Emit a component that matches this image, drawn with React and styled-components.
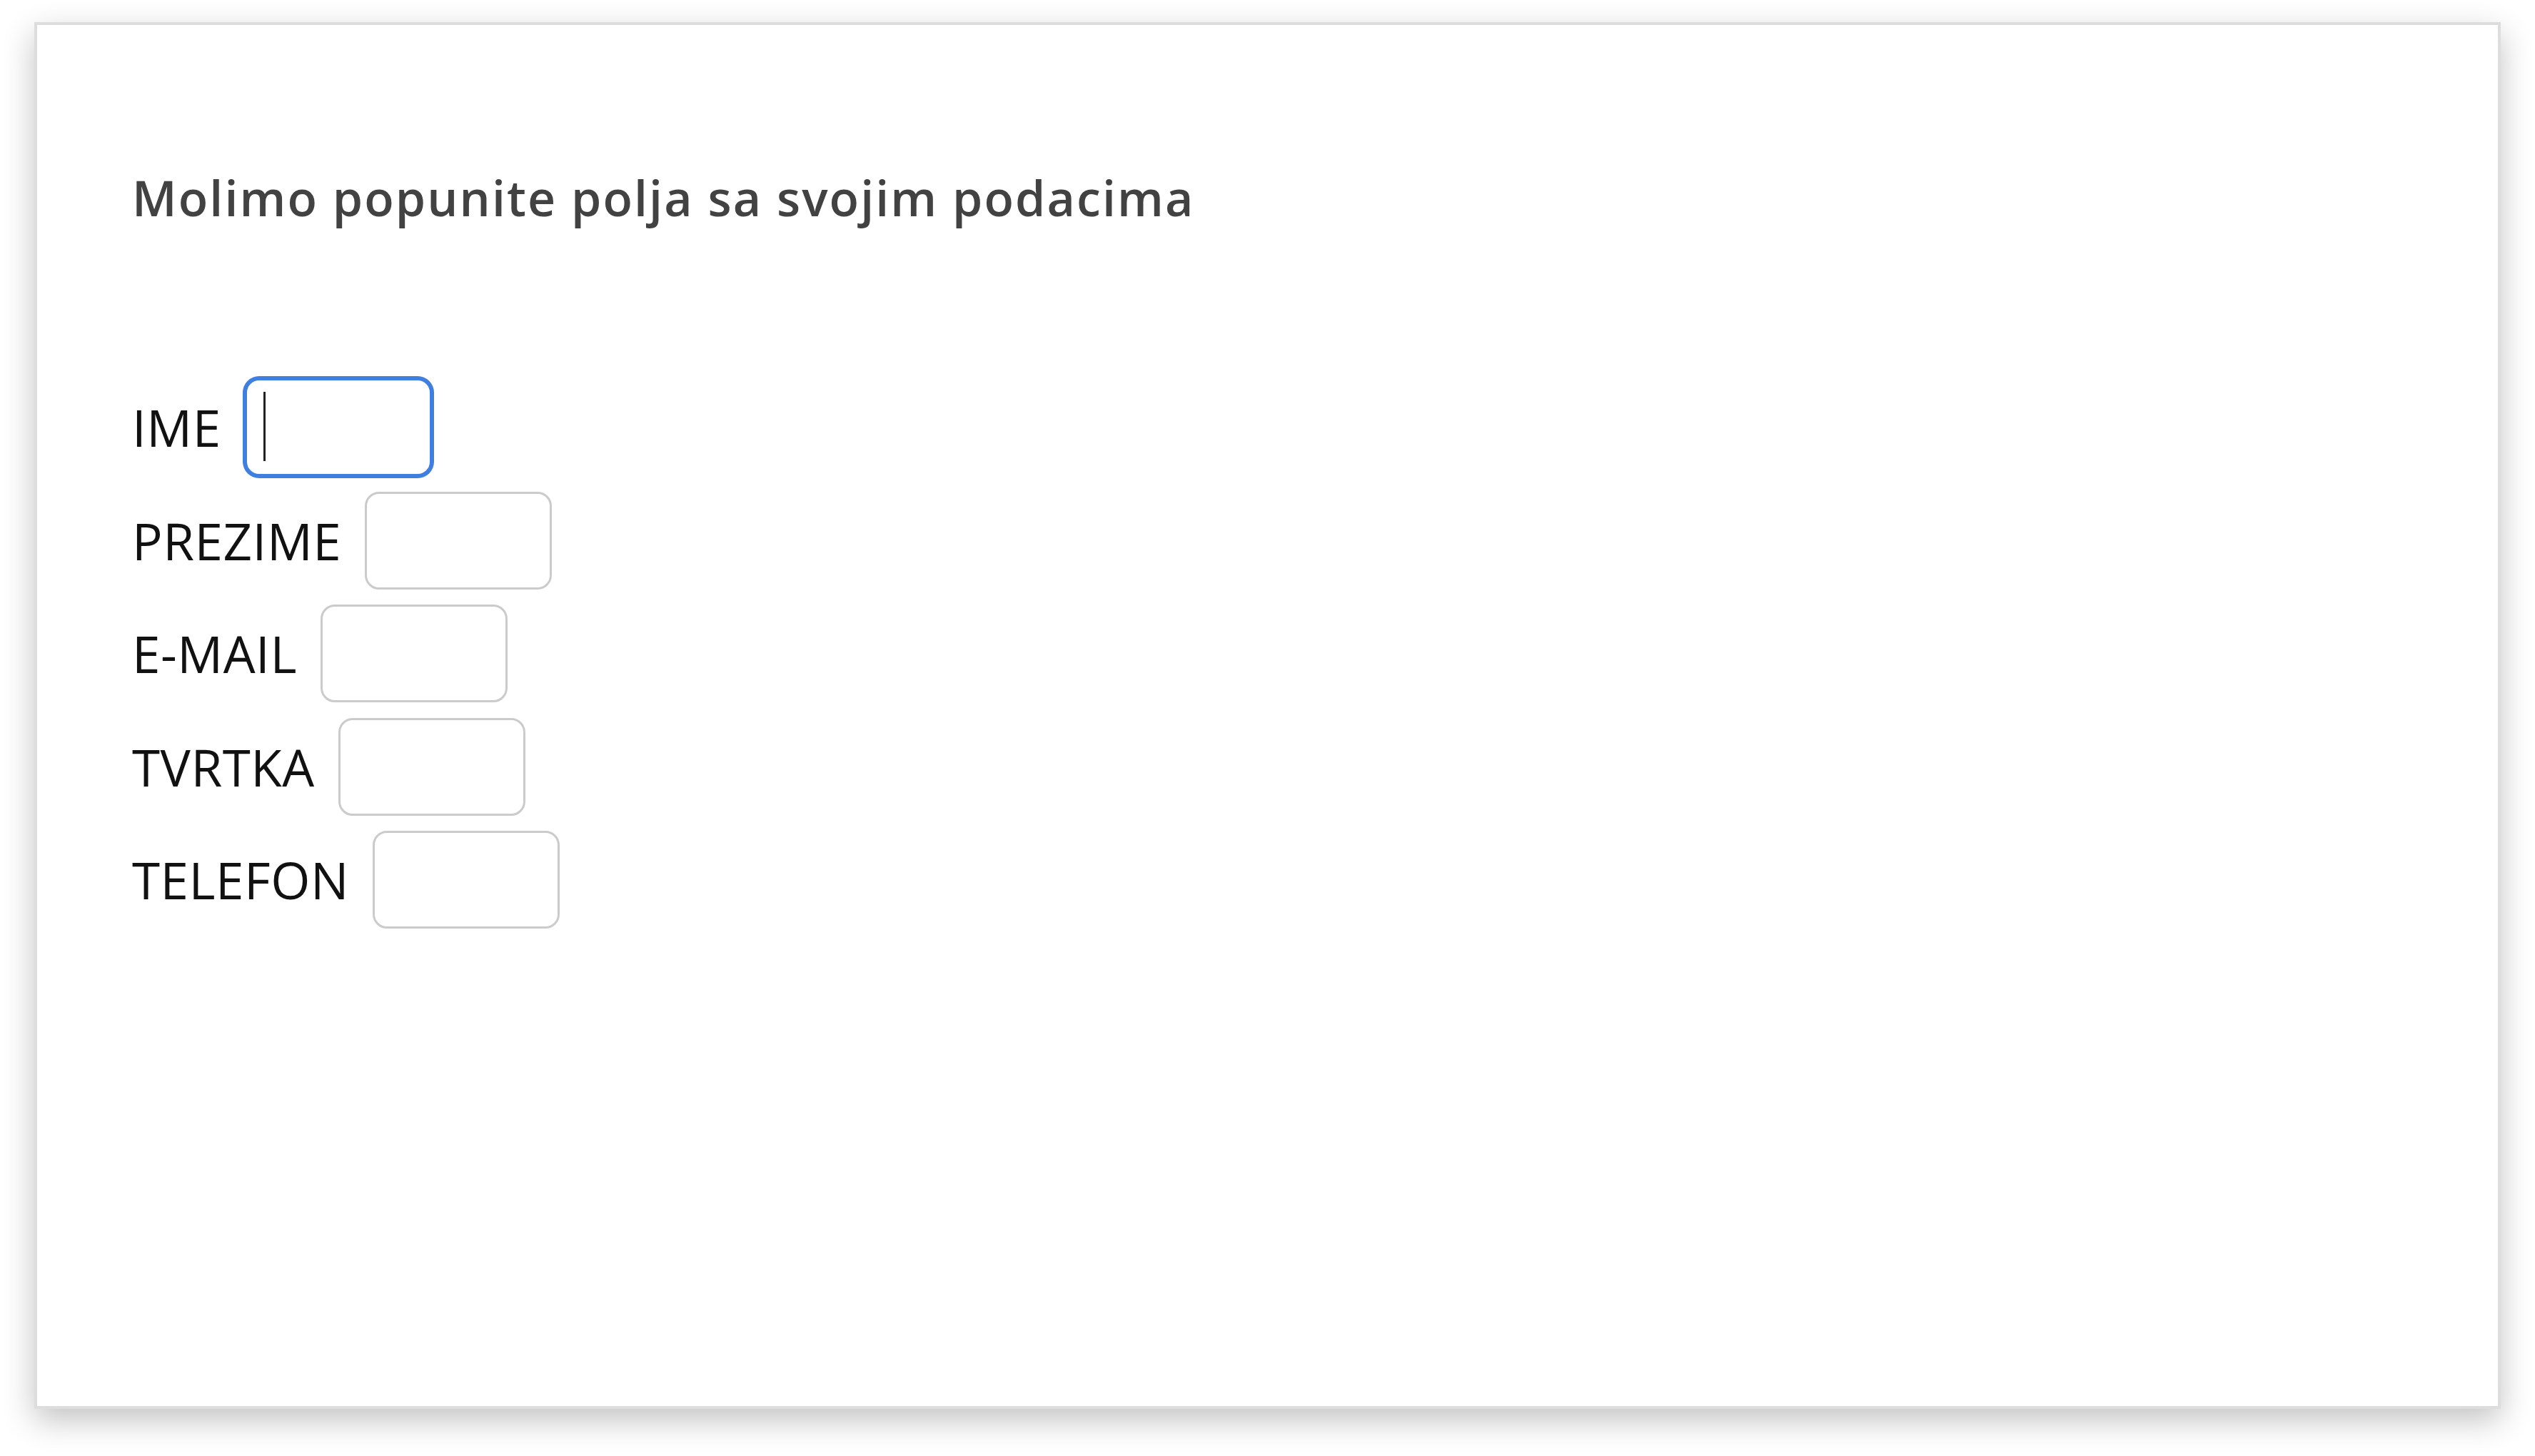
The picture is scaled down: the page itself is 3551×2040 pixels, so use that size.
import React from "react";
import styled, { createGlobalStyle } from "styled-components";

const Global = createGlobalStyle`
  html, body {
    margin: 0;
    padding: 0;
    background: #ffffff;
  }
  body {
    font-family: "Open Sans", "Liberation Sans", sans-serif;
  }
  * { box-sizing: border-box; }
`;

const Page = styled.main`
  min-height: 100vh;
  padding: 31px 48px 66px 48px;
  background: #ffffff;
`;

const Card = styled.section`
  height: 1943px;
  background: #ffffff;
  border: 4px solid #dddddd;
  box-shadow: 0 16px 42px rgba(0, 0, 0, 0.24);
  padding: 195px 133px 0 133px;
`;

const Heading = styled.h1`
  margin: 0;
  font-family: "Open Sans", "Liberation Sans", sans-serif;
  font-size: 68px;
  font-weight: 600;
  letter-spacing: 2.1px;
  line-height: normal;
  color: #424242;
`;

const Form = styled.form`
  margin-top: 207px;
  display: flex;
  flex-direction: column;
  gap: 21.5px;
`;

const Row = styled.div`
  display: flex;
  align-items: center;
  gap: 33px;
`;

const Label = styled.label`
  font-family: "Open Sans", "Liberation Sans", sans-serif;
  font-size: 71px;
  font-weight: 400;
  letter-spacing: 0.5px;
  line-height: normal;
  color: #111111;
`;

const FieldWrap = styled.span`
  position: relative;
  display: inline-flex;
`;

const Input = styled.input`
  width: 262px;
  height: 137px;
  border: 3px solid ${(p) => (p.$focused ? "#3f7fe0" : "#cbcbcb")};
  border-radius: 20px;
  background: #ffffff;
  outline: none;
  box-shadow: ${(p) => (p.$focused ? "0 0 0 3px #3f7fe0" : "none")};
  caret-color: transparent;
  font-family: "Open Sans", "Liberation Sans", sans-serif;
  font-size: 70px;
  padding: 0 20px;
`;

const Caret = styled.span`
  position: absolute;
  left: 26px;
  top: 19px;
  width: 3px;
  height: 97px;
  background: #222222;
  pointer-events: none;
`;

const fields = [
  { id: "ime", label: "IME", focused: true },
  { id: "prezime", label: "PREZIME" },
  { id: "email", label: "E-MAIL" },
  { id: "tvrtka", label: "TVRTKA" },
  { id: "telefon", label: "TELEFON" },
];

export default function App() {
  return (
    <>
      <Global />
      <Page>
        <Card>
          <Heading>Molimo popunite polja sa svojim podacima</Heading>
          <Form onSubmit={(e) => e.preventDefault()}>
            {fields.map((f) => (
              <Row key={f.id}>
                <Label htmlFor={f.id}>{f.label}</Label>
                <FieldWrap>
                  <Input id={f.id} type="text" $focused={!!f.focused} />
                  {f.focused && <Caret />}
                </FieldWrap>
              </Row>
            ))}
          </Form>
        </Card>
      </Page>
    </>
  );
}
